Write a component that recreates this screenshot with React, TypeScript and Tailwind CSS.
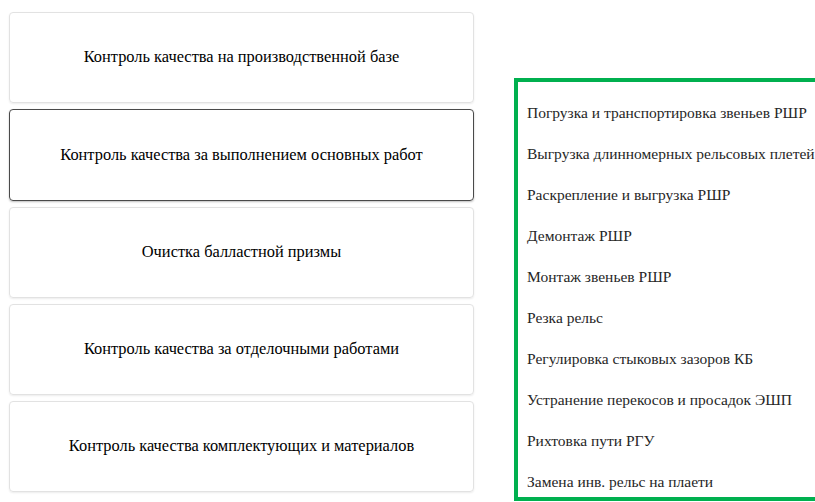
const cards = [
  "Контроль качества на производственной базе",
  "Контроль качества за выполнением основных работ",
  "Очистка балластной призмы",
  "Контроль качества за отделочными работами",
  "Контроль качества комплектующих и материалов",
];

const works = [
  "Погрузка и транспортировка звеньев РШР",
  "Выгрузка длинномерных рельсовых плетей",
  "Раскрепление и выгрузка РШР",
  "Демонтаж РШР",
  "Монтаж звеньев РШР",
  "Резка рельс",
  "Регулировка стыковых зазоров КБ",
  "Устранение перекосов и просадок ЭШП",
  "Рихтовка пути РГУ",
  "Замена инв. рельс на плаети",
];

export default function App() {
  return (
    <div className="w-[815px] h-[502px] bg-white flex overflow-hidden [font-family:Liberation_Serif,serif]">
      {/* category cards */}
      <div className="w-[474px] shrink-0 pl-[9px] pt-[12px] flex flex-col gap-[6px]">
        {cards.map((c, i) => (
          <div
            key={c}
            className={
              i === 1
                ? "h-[92px] flex items-center justify-center rounded-[4px] border border-[#4a4a4a] shadow-[0_1px_2px_rgba(0,0,0,0.25)]"
                : "h-[91px] flex items-center justify-center rounded-[4px] border border-[#e2e2e2] shadow-[0_1px_2px_rgba(0,0,0,0.08)]"
            }
          >
            <span className="[font-family:Liberation_Serif,serif] text-[16.4px] text-black">{c}</span>
          </div>
        ))}
      </div>
      {/* list of works */}
      <div className="ml-[40px] mt-[78px] w-[330px] h-[423px] shrink-0 border-[4px] border-[#00b04f] overflow-hidden pt-[10px] pl-[9px]">
        {works.map((w) => (
          <div key={w} className="h-[41px] flex items-center whitespace-nowrap">
            <span className="[font-family:Liberation_Serif,serif] text-[15.5px] text-[#262626]">{w}</span>
          </div>
        ))}
      </div>
    </div>
  );
}
